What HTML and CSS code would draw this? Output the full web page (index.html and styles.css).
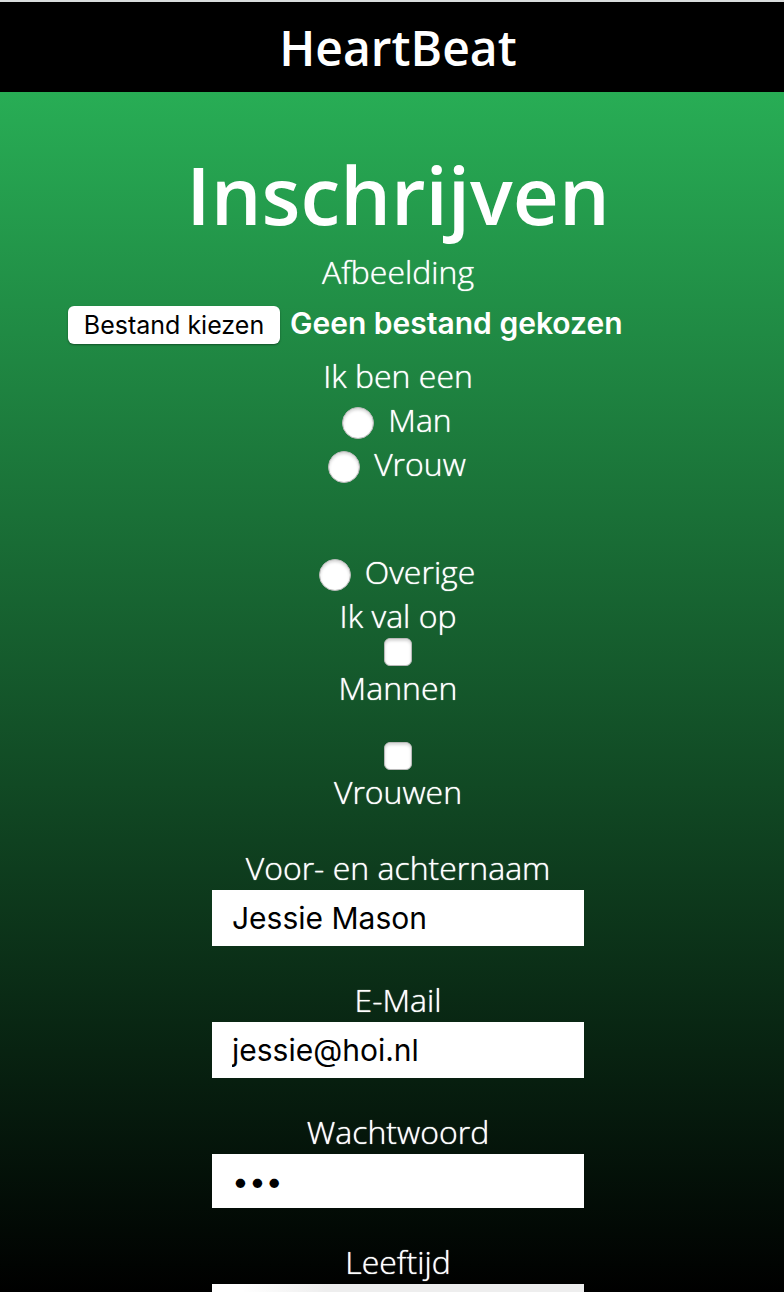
FILE: index.html
```html
<!DOCTYPE html>
<html lang="nl">
<head>
<meta charset="utf-8">
<meta name="viewport" content="width=device-width, initial-scale=1">
<title>HeartBeat</title>
<link rel="stylesheet" href="styles.css">
</head>
<body>
<header class="site-header"><p class="brand">HeartBeat</p></header>
<main class="page">
  <h1 class="title">Inschrijven</h1>
  <form class="form">
    <label for="image">Afbeelding</label>
    <div class="file">
      <button class="file-button" id="image" type="button">Bestand kiezen</button>
      <span class="file-name">Geen bestand gekozen</span>
    </div>
    <div class="radios" role="radiogroup" aria-labelledby="gender">
      <span id="gender">Ik ben een</span>
      <label class="option"><input class="radio" type="radio" name="gender" value="man">Man</label>
      <label class="option"><input class="radio" type="radio" name="gender" value="vrouw">Vrouw</label>
      <label class="option option-other"><input class="radio" type="radio" name="gender" value="overige">Overige</label>
    </div>
    <span>Ik val op</span>
    <div class="group">
      <input class="check" type="checkbox" id="men">
      <label for="men">Mannen</label>
    </div>
    <div class="group">
      <input class="check" type="checkbox" id="women">
      <label for="women">Vrouwen</label>
    </div>
    <div class="group">
      <label for="name">Voor- en achternaam</label>
      <input class="field" type="text" id="name" value="Jessie Mason">
    </div>
    <div class="group">
      <label for="email">E-Mail</label>
      <input class="field" type="email" id="email" value="jessie@hoi.nl">
    </div>
    <div class="group">
      <label for="password">Wachtwoord</label>
      <input class="field field-password" type="password" id="password" value="hoi">
    </div>
    <div class="group">
      <label for="age">Leeftijd</label>
      <select class="field select" id="age"><option></option></select>
    </div>
  </form>
</main>
</body>
</html>
```

FILE: styles.css
```css
* {
  box-sizing: border-box;
}

body {
  display: flex;
  flex-direction: column;
  height: 100vh;
  margin: 0;
  overflow: hidden;
  color: #fff;
  font: 300 32px/44px "Open Sans", sans-serif;
}

.site-header {
  flex: none;
  padding: 14px 0 12px 12px;
  border-top: 2px solid #d9dcdc;
  background: #000;
  text-align: center;
}

.brand {
  margin: 0;
  font-size: 48px;
  font-weight: 600;
  line-height: 64px;
}

.page {
  flex: 1;
  min-height: 0;
  padding: 46px 0 0 12px;
  overflow: hidden;
  background: linear-gradient(#28ad55, #000);
}

.title {
  margin: 0;
  font-size: 80px;
  font-weight: 600;
  line-height: 112px;
  text-align: center;
}

.form,
.radios,
.group {
  display: flex;
  flex-direction: column;
  align-items: center;
}

.form {
  padding: 0 56px;
  text-shadow: 0 0 1px #fff;
}

.file {
  display: flex;
  align-self: stretch;
  align-items: baseline;
  gap: 10px;
  height: 60px;
  padding-top: 9px;
  font-family: Inter, sans-serif;
  text-shadow: none;
}

.file-button {
  width: 212px;
  height: 38px;
  padding: 0;
  border: 0;
  border-radius: 6px;
  background: #fff;
  box-shadow: 0 1px 2px rgba(0, 0, 0, 0.4);
  color: #000;
  font: 400 25px/38px Inter, sans-serif;
}

.file-name {
  font-size: 30px;
  font-weight: 600;
  line-height: 40px;
}

.option {
  display: flex;
  align-items: flex-start;
  gap: 14px;
  padding-right: 2px;
}

.option-other {
  margin-top: 64px;
}

.radio,
.check {
  flex: none;
  appearance: none;
  margin: 0;
  border: 1px solid #b9b9b9;
  background: #fff;
  box-shadow: inset 0 2px 3px rgba(0, 0, 0, 0.16);
}

.radio {
  width: 32px;
  height: 32px;
  margin-top: 9px;
  border-radius: 50%;
}

.check {
  width: 28px;
  height: 28px;
  border-radius: 6px;
}

.group {
  margin-bottom: 32px;
}

.field {
  width: 372px;
  max-width: 100%;
  height: 56px;
  padding: 0 20px;
  border: 0;
  border-radius: 0;
  background: #fff;
  color: #000;
  font: 400 30px/40px Inter, sans-serif;
}

.field-password {
  height: 54px;
}

.select {
  appearance: none;
  background: linear-gradient(100deg, #fff 8%, #eee 30%);
}
```
